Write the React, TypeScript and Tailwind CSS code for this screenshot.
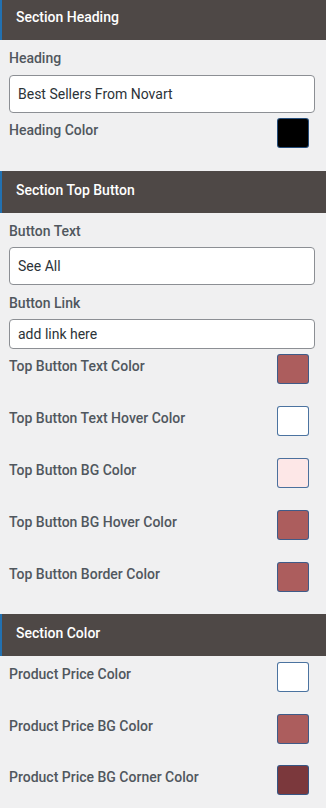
// Base Imports
import React from 'react'

type ColorField = { label: string; color: string }

const topButtonColors: ColorField[] = [
  { label: 'Top Button Text Color', color: '#ac5d5d' },
  { label: 'Top Button Text Hover Color', color: '#ffffff' },
  { label: 'Top Button BG Color', color: '#fde7e7' },
  { label: 'Top Button BG Hover Color', color: '#ac5d5d' },
  { label: 'Top Button Border Color', color: '#ac5d5d' },
]

const sectionColors: ColorField[] = [
  { label: 'Product Price Color', color: '#ffffff' },
  { label: 'Product Price BG Color', color: '#ac5d5d' },
  { label: 'Product Price BG Corner Color', color: '#7b383c' },
]

function SectionHeader({ title, first }: { title: string; first?: boolean }) {
  return (
    <div
      className={`flex items-center border-l-2 border-[#2271b1] bg-[#4e4846] pl-[14px] text-[14px] font-medium text-white ${
        first ? 'h-[40px] pb-[5px]' : 'h-[42px] pb-[3px]'
      }`}
    >
      {title}
    </div>
  )
}

function Label({ children }: { children: React.ReactNode }) {
  return <div className="h-5 text-[14px] font-medium leading-5 text-[#50575e]">{children}</div>
}

function TextInput({ value, small }: { value: string; small?: boolean }) {
  return (
    <input
      readOnly
      value={value}
      className={`w-full rounded-[4px] border border-[#8c8f94] bg-white px-2 text-[14px] text-[#2c3338] outline-none ${
        small ? 'h-[30px]' : 'h-[38px]'
      }`}
    />
  )
}

function ColorRow({ label, color }: ColorField) {
  return (
    <div className="flex h-[30px] items-start justify-between pr-[6px]">
      <div className="mt-[2px]">
        <Label>{label}</Label>
      </div>
      <div
        className="h-[30px] w-[32px] rounded-[3px] border border-[#2c5a8f]/85"
        style={{ backgroundColor: color }}
      />
    </div>
  )
}

export default function App() {
  return (
    <div
      className="min-h-[808px] w-[326px] bg-[#f0f0f1]"
      style={{ fontFamily: 'Roboto, "Liberation Sans", sans-serif' }}
    >
      <SectionHeader title="Section Heading" first />
      <div className="pl-[9px] pr-[11px] pt-2">
        <Label>Heading</Label>
        <div className="mt-[7px]">
          <TextInput value="Best Sellers From Novart" />
        </div>
        <div className="mt-[5px]">
          <ColorRow label="Heading Color" color="#000000" />
        </div>
      </div>

      <div className="mt-[23px]">
        <SectionHeader title="Section Top Button" />
      </div>
      <div className="pl-[9px] pr-[11px] pt-2">
        <Label>Button Text</Label>
        <div className="mt-[6px]">
          <TextInput value="See All" />
        </div>
        <div className="mt-[8px]">
          <Label>Button Link</Label>
        </div>
        <div className="mt-[6px]">
          <TextInput value="add link here" small />
        </div>
        <div className="mt-[5px] flex flex-col gap-[22px]">
          {topButtonColors.map((item, idx) => (
            <ColorRow key={idx} label={item.label} color={item.color} />
          ))}
        </div>
      </div>

      <div className="mt-[22px]">
        <SectionHeader title="Section Color" />
      </div>
      <div className="pl-[9px] pr-[11px] pt-[6px]">
        <div className="flex flex-col gap-[21.5px]">
          {sectionColors.map((item, idx) => (
            <ColorRow key={idx} label={item.label} color={item.color} />
          ))}
        </div>
      </div>
    </div>
  )
}
